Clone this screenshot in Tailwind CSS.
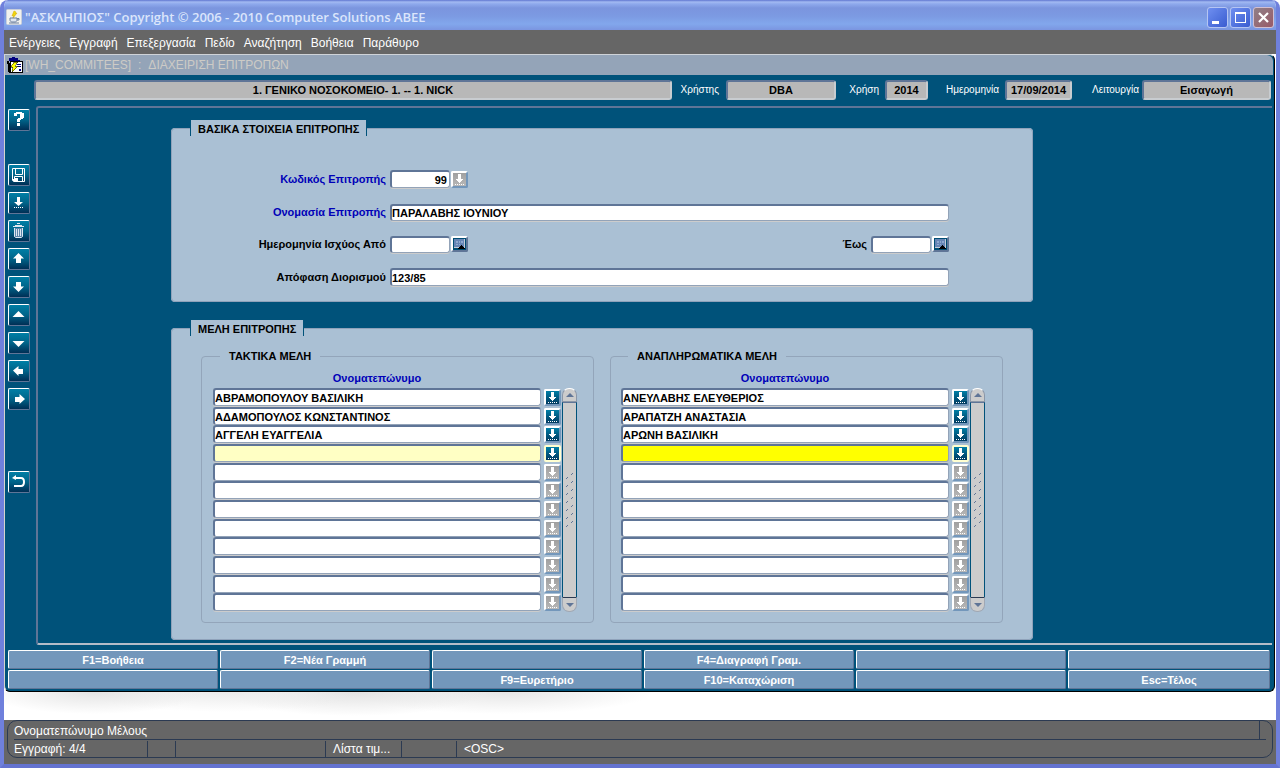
<!DOCTYPE html>
<html lang="el">
<head>
<meta charset="utf-8">
<title>ΑΣΚΛΗΠΙΟΣ - Διαχείριση Επιτροπών</title>
<script src="https://cdn.jsdelivr.net/npm/@tailwindcss/browser@4"></script>
</head>
<body class="flex min-h-screen flex-col rounded-t-lg border-x-4 border-b-4 border-x-[#6f80dc] border-b-[#6473d0] bg-white font-['Liberation_Sans',Arial,sans-serif] text-[11px] leading-4 text-black">

<!-- shared icon shapes -->
<svg class="hidden" aria-hidden="true">
  <symbol id="list" viewBox="0 0 13 13" shape-rendering="crispEdges"><path fill="currentColor" d="M5 1h3v5h2v1H9v1H8v1H7v1H6V9H5V8H4V7H3V6h2zM2 11h1v1H2zM4 11h1v1H4zM6 11h1v1H6zM8 11h1v1H8zM10 11h1v1h-1z"/></symbol>
  <symbol id="cal" viewBox="0 0 13 12" shape-rendering="crispEdges"><path fill="#004d73" d="M0 0h13v12H0z"/><path fill="#c3ccd6" d="M1 1h11v9H1z"/><path fill="#6685b5" d="M1 1h10v8H1z"/><path fill="#8fa9cf" d="M3 3h2v2H3zM6 3h1v2H6zM8 3h2v2H8zM3 6h2v1H3zM6 6h1v1H6z"/><path fill="#000" d="M8 7h1v1h1v1h1v1h1v1H5v-1h1V9h1V8h1z"/></symbol>
</svg>

<!-- title bar -->
<header class="-mx-1 flex h-[30px] shrink-0 items-center rounded-t-lg bg-[linear-gradient(#6076d0_0,#a3baf2_2px,#8ea9ec_4px,#7b95de_8px,#7c9ae2_16px,#82a7ec_24px,#7b95e0_30px)] pt-1 pr-[6px] pl-[6px]">
  <svg class="h-4 w-4" viewBox="0 0 16 16"><rect x=".5" y=".5" width="15" height="15" rx="1" fill="#f2f2ee" stroke="#c9cfdc"/><path d="M8 2l2 1-1 2 2-1-4 5 1-3-2 1z" fill="#f5d90a" stroke="#d8b400" stroke-width=".6"/><path d="M4 9h7v2c0 1-1 2-2 2H6c-1 0-2-1-2-2zM11 9.500h2v1.500h-2" fill="#dfe6f0" stroke="#6b7f9e"/><path d="M3 14h10" stroke="#6b7f9e"/></svg>
  <h1 class="ml-[3px] flex-1 font-['Open_Sans','Noto_Sans',sans-serif] text-[13px] font-semibold whitespace-nowrap text-[#dbe5fb]">"ΑΣΚΛΗΠΙΟΣ" Copyright © 2006 - 2010 Computer Solutions ΑΒΕΕ</h1>
  <div class="flex gap-[2px]">
    <button aria-label="Ελαχιστοποίηση" class="h-[21px] w-[21px] rounded-[3px] border border-[#b5c5f3] bg-linear-to-br from-[#6f8ff0] to-[#3a5cd0]"><svg class="h-[19px] w-[19px]" viewBox="0 0 19 19"><path d="M4 13h7v3H4z" fill="#fff"/></svg></button>
    <button aria-label="Μεγιστοποίηση" class="h-[21px] w-[21px] rounded-[3px] border border-[#b5c5f3] bg-linear-to-br from-[#6f8ff0] to-[#3a5cd0]"><svg class="h-[19px] w-[19px]" viewBox="0 0 19 19"><path fill-rule="evenodd" d="M4 4h11v11H4zM5 6v8h9V6z" fill="#fff"/></svg></button>
    <button aria-label="Κλείσιμο" class="h-[21px] w-[21px] rounded-[3px] border border-[#d3bfd0] bg-linear-to-br from-[#8f8088] to-[#985a68]"><svg class="h-[19px] w-[19px]" viewBox="0 0 19 19"><path d="M5 5l9 9M14 5l-9 9" stroke="#fff" stroke-width="2.200"/></svg></button>
  </div>
</header>

<nav class="flex h-6 shrink-0 items-center gap-[9px] bg-[#666] pt-[2px] pl-[5px] text-[12px] text-white">
  <button>Ενέργειες</button><button>Εγγραφή</button><button>Επεξεργασία</button><button>Πεδίο</button><button>Αναζήτηση</button><button>Βοήθεια</button><button>Παράθυρο</button>
</nav>

<!-- form window -->
<main class="mr-px flex flex-col rounded-tr-md rounded-b-md border border-t-[#cfd3d8] border-r-black border-b-black border-l-[#d4d4cc] bg-[#00527a]">
  <div class="mr-px flex h-5 items-center rounded-tr-md bg-[#94a4b8] pl-[2px] text-[12px] text-[#cdcbc6]">
    <svg class="h-4 w-4" viewBox="0 0 16 16" shape-rendering="crispEdges"><path fill="#000080" d="M2 1h3V0h3v1h3v2h2v1H2z"/><path fill="#000" d="M0 4h2v3H0zM1 6h2v9h13v1H2v-1H1z"/><path fill="#fff" stroke="#000" d="M3.500 4.500h12v11h-12z"/><path fill="#000080" d="M10 7h4v1h-4zM10 9h4v1h-4zM12 12h2v2h-2z"/><path fill="#ff0" stroke="#000" stroke-width=".5" d="M7 5h4L8 9h3l-6 6 1-5H4z"/></svg>
    <h2 class="flex gap-[7px] pl-[2px] whitespace-nowrap"><span>[WH_COMMITEES]</span><span>:</span><span>ΔΙΑΧΕΙΡΙΣΗ ΕΠΙΤΡΟΠΩΝ</span></h2>
  </div>

  <div class="mt-[5px] flex h-5 items-center pr-[3px] pl-[29px] text-[10px] text-white">
    <input aria-label="Νοσοκομείο" readonly value="1. ΓΕΝΙΚΟ ΝΟΣΟΚΟΜΕΙΟ- 1. -- 1. NICK" class="h-5 min-w-0 flex-1 rounded-[3px] border-2 border-t-[#5f7597] border-r-[#c8ccd0] border-b-[#c8ccd0] border-l-[#5f7597] bg-[#b8b8b8] text-center text-[11px] font-bold text-black">
    <label for="h1" class="w-[54px] pr-[7px] text-right">Χρήστης</label>
    <input id="h1" readonly value="DBA" class="h-5 w-[110px] rounded-[3px] border-2 border-t-[#5f7597] border-r-[#c8ccd0] border-b-[#c8ccd0] border-l-[#5f7597] bg-[#b8b8b8] text-center text-[11px] font-bold text-black">
    <label for="h2" class="w-[49px] pr-[6px] text-right">Χρήση</label>
    <input id="h2" readonly value="2014" class="h-5 w-[43px] rounded-[3px] border-2 border-t-[#5f7597] border-r-[#c8ccd0] border-b-[#c8ccd0] border-l-[#5f7597] bg-[#b8b8b8] text-center text-[11px] font-bold text-black">
    <label for="h3" class="w-[77px] pr-[6px] text-right">Ημερομηνία</label>
    <input id="h3" readonly value="17/09/2014" class="h-5 w-[67px] rounded-[3px] border-2 border-t-[#5f7597] border-r-[#c8ccd0] border-b-[#c8ccd0] border-l-[#5f7597] bg-[#b8b8b8] text-center text-[11px] font-bold text-black">
    <label for="h4" class="w-[70px] pr-[3px] text-right">Λειτουργία</label>
    <input id="h4" readonly value="Εισαγωγή" class="h-5 w-[129px] rounded-[3px] border-2 border-t-[#5f7597] border-r-[#c8ccd0] border-b-[#c8ccd0] border-l-[#5f7597] bg-[#b8b8b8] text-center text-[11px] font-bold text-black">
  </div>

  <div class="mt-[6px] mr-[2px] flex">
    <div id="tools" class="flex w-[31px] shrink-0 flex-col gap-[6px] pt-[3px] pl-[3px]"></div>

    <div class="flex-1 rounded-l-[3px] border-t-2 border-b-2 border-l-2 border-t-[#5f7597] border-b-[#b4bcc8] border-l-[#5f7597] pt-3 pb-[3px] pl-[133px]">
      <fieldset class="w-[862px] rounded-[4px] border border-[#8fa2ba] bg-[#aac0d4] pt-[34px] pb-[14px] font-bold">
        <legend class="ml-[18px] h-4 border-x border-[#00527a] bg-[#aac0d4] px-[7px] leading-[18px]">ΒΑΣΙΚΑ ΣΤΟΙΧΕΙΑ ΕΠΙΤΡΟΠΗΣ</legend>
        <div class="flex w-[777px] flex-col gap-[15px]">
          <div class="flex h-[18px] items-center">
            <label for="code" class="w-[218px] pr-1 text-right text-[#0000b8]">Κωδικός Επιτροπής</label>
            <input id="code" value="99" class="h-[18px] w-[60px] rounded-[3px] border border-t-2 border-l-2 border-t-[#5f7597] border-r-[#93a3b8] border-b-[#93a3b8] border-l-[#5f7597] bg-white pr-[2px] text-right font-bold shadow-[0_1px_#ccc]">
            <button aria-label="Λίστα κωδικών" class="ml-px h-[17px] w-[17px] rounded-[2px] border-2 border-t-white border-r-[#7397bb] border-b-[#7397bb] border-l-white bg-linear-to-b from-[#a0a0a0] to-[#b8b8b8] text-white"><svg class="h-[13px] w-[13px]"><use href="#list"/></svg></button>
          </div>
          <div class="flex h-[18px] items-center">
            <label for="name" class="w-[218px] pr-1 text-right text-[#0000b8]">Ονομασία Επιτροπής</label>
            <input id="name" value="ΠΑΡΑΛΑΒΗΣ ΙΟΥΝΙΟΥ" class="h-[17px] min-w-0 flex-1 rounded-[3px] border border-t-2 border-l-2 border-t-[#5f7597] border-r-[#93a3b8] border-b-[#93a3b8] border-l-[#5f7597] bg-white font-bold shadow-[0_1px_#ccc]">
          </div>
          <div class="flex h-4 items-center">
            <label for="from" class="w-[218px] pr-1 text-right">Ημερομηνία Ισχύος Από</label>
            <input id="from" class="h-[17px] w-[60px] rounded-[3px] border border-t-2 border-l-2 border-t-[#5f7597] border-r-[#93a3b8] border-b-[#93a3b8] border-l-[#5f7597] bg-white font-bold shadow-[0_1px_#ccc]">
            <button aria-label="Ημερολόγιο από" class="ml-px h-4 w-[17px] rounded-[2px] border-2 border-t-white border-r-[#5f7597] border-b-[#5f7597] border-l-white bg-[#004d73]"><svg class="h-3 w-[13px]"><use href="#cal"/></svg></button>
            <label for="to" class="flex-1 pr-1 text-right">Έως</label>
            <input id="to" class="h-[17px] w-[60px] rounded-[3px] border border-t-2 border-l-2 border-t-[#5f7597] border-r-[#93a3b8] border-b-[#93a3b8] border-l-[#5f7597] bg-white font-bold shadow-[0_1px_#ccc]">
            <button aria-label="Ημερολόγιο έως" class="ml-px h-4 w-[17px] rounded-[2px] border-2 border-t-white border-r-[#5f7597] border-b-[#5f7597] border-l-white bg-[#004d73]"><svg class="h-3 w-[13px]"><use href="#cal"/></svg></button>
          </div>
          <div class="flex h-5 items-center">
            <label for="decision" class="w-[218px] pr-1 text-right">Απόφαση Διορισμού</label>
            <input id="decision" value="123/85" class="h-[18px] min-w-0 flex-1 rounded-[3px] border border-t-2 border-l-2 border-t-[#5f7597] border-r-[#93a3b8] border-b-[#93a3b8] border-l-[#5f7597] bg-white font-bold shadow-[0_1px_#ccc]">
          </div>
        </div>
      </fieldset>

      <fieldset class="mt-[18px] w-[862px] rounded-[4px] border border-[#8fa2ba] bg-[#aac0d4] pt-3 pb-4 pl-[29px] font-bold">
        <legend class="-ml-[11px] h-4 border-x border-[#00527a] bg-[#aac0d4] px-[7px] leading-[18px]">ΜΕΛΗ ΕΠΙΤΡΟΠΗΣ</legend>
        <div class="flex gap-4">
          <fieldset class="w-[393px] rounded-[4px] border border-[#93a5ba] px-[11px] pt-[6px] pb-[10px]">
            <legend class="ml-[7px] h-4 px-[9px]">ΤΑΚΤΙΚΑ ΜΕΛΗ</legend>
            <div class="h-[18px] w-[328px] text-center text-[#0000b8]">Ονοματεπώνυμο</div>
            <div class="flex"><div id="regular" class="grid h-[224px] w-[350px] grid-rows-12"></div><div class="scroll-slot"></div></div>
          </fieldset>
          <fieldset class="w-[393px] rounded-[4px] border border-[#93a5ba] px-[10px] pt-[6px] pb-[10px]">
            <legend class="ml-[7px] h-4 px-[9px]">ΑΝΑΠΛΗΡΩΜΑΤΙΚΑ ΜΕΛΗ</legend>
            <div class="h-[18px] w-[328px] text-center text-[#0000b8]">Ονοματεπώνυμο</div>
            <div class="flex"><div id="substitute" class="grid h-[224px] w-[350px] grid-rows-12"></div><div class="scroll-slot"></div></div>
          </fieldset>
        </div>
      </fieldset>
    </div>
  </div>

  <div id="keys" class="mt-[5px] grid grid-cols-[repeat(5,210fr)_202fr] gap-x-[2px] gap-y-px pr-1 pb-[2px] pl-[3px]"></div>
</main>

<div class="min-h-5 flex-1 bg-[radial-gradient(ellipse_110px_22px_at_90px_0,#e4e4e4,transparent),radial-gradient(ellipse_140px_20px_at_220px_0,#ebebeb,transparent),radial-gradient(ellipse_130px_24px_at_350px_0,#e2e2e2,transparent),radial-gradient(ellipse_150px_22px_at_500px_0,#e6e6e6,transparent)]"></div>

<footer class="shrink-0 bg-[#666] pr-[3px] pb-[6px] pl-[3px] text-[12px] text-white">
  <div class="rounded-[10px] border border-[#2b3a52]">
    <div class="mx-[6px] flex h-[19px] items-center border-b border-[#2b3a52]"><span class="flex-1 pt-px">Ονοματεπώνυμο Μέλους</span><span class="mr-[6px] h-[18px] w-px bg-[#2b3a52]"></span></div>
    <div class="mx-[6px] flex h-[17px] items-center leading-4">
      <span class="w-[134px] border-r border-[#2b3a52]">Εγγραφή: 4/4</span>
      <span class="h-4 w-7 border-r border-[#2b3a52]"></span>
      <span class="h-4 w-[150px] border-r border-[#2b3a52]"></span>
      <span class="w-[76px] border-r border-[#2b3a52] pl-[7px]">Λίστα τιμ...</span>
      <span class="h-4 w-[55px] border-r border-[#2b3a52]"></span>
      <span class="pl-[7px]">&lt;OSC&gt;</span>
    </div>
  </div>
</footer>

<script>
const tools = [
  ['Βοήθεια', 'mb-[27px]', '<path fill="#fff" d="M5 3h2V2h6v1h2v5h-1v1h-2v1h-1v2H8V9h1V8h2V4H8v2H5zM8 13h3v3H8z"/>'],
  ['Αποθήκευση', '', '<path fill="none" stroke="#fff" d="M3.500 3.500h12v13h-11l-1-1zM6.500 3.500v6h7v-6M5.500 16.500v-5h8v5"/><path fill="#fff" d="M6 13h3v3H6zM4 14h1v2H4z"/>'],
  ['Λίστα', '', '<path fill="#fff" d="M8 4h3v5h3l-4.500 4L5 9h3zM5 14h1v1H5zM7 14h1v1H7zM9 14h1v1H9zM11 14h1v1h-1zM13 14h1v1h-1z"/>'],
  ['Διαγραφή', '', '<path fill="#5f86ab" d="M5 7h9v9H5z"/><path fill="none" stroke="#dfe8f2" d="M5.500 7v8.500l1 1h6l1-1V7M7.500 8v7M9.500 8v7M11.500 8v7M4 5.500h11M6 4.500h7M8 2.500h3"/>'],
  ['Επάνω', '', '<path fill="#fff" d="M9.500 4L15 9.500h-3V14H7V9.500H4z"/>'],
  ['Κάτω', '', '<path fill="#fff" d="M9.500 15L4 9.500h3V5h5v4.500h3z"/>'],
  ['Προηγούμενη σελίδα', '', '<path fill="#fff" d="M9.500 6l6 6h-12z"/>'],
  ['Επόμενη σελίδα', '', '<path fill="#fff" d="M9.500 14l6-6h-12z"/>'],
  ['Αριστερά', '', '<path fill="#fff" d="M4 9.500L9.500 5v3H14v5H9.500v2z"/>'],
  ['Δεξιά', 'mb-[55px]', '<path fill="#fff" d="M16 10l-5.500-5v3H6v5h4.500v2z"/>'],
  ['Επιστροφή', '', '<path fill="#fff" d="M3 6l4-3v5z"/><path fill="none" stroke="#fff" stroke-width="2" d="M6 6h6c4 0 4 8 0 8H5"/>']
];
document.getElementById('tools').innerHTML = tools.map(([name, gap, shape]) =>
  `<button aria-label="${name}" class="${gap} h-[22px] w-[22px] rounded-[2px] border border-t-white border-r-[#5f7597] border-b-[#5f7597] border-l-white bg-linear-to-b from-[#007fa6] via-[#006489] to-[#002f55]"><svg class="h-5 w-5" viewBox="0 0 20 20">${shape}</svg></button>`).join('');

const members = {
  regular: ['Τακτικό μέλος', 'bg-[#ffffc4]', ['ΑΒΡΑΜΟΠΟΥΛΟΥ ΒΑΣΙΛΙΚΗ', 'ΑΔΑΜΟΠΟΥΛΟΣ ΚΩΝΣΤΑΝΤΙΝΟΣ', 'ΑΓΓΕΛΗ ΕΥΑΓΓΕΛΙΑ']],
  substitute: ['Αναπληρωματικό μέλος', 'bg-[#ffff00]', ['ΑΝΕΥΛΑΒΗΣ ΕΛΕΥΘΕΡΙΟΣ', 'ΑΡΑΠΑΤΖΗ ΑΝΑΣΤΑΣΙΑ', 'ΑΡΩΝΗ ΒΑΣΙΛΙΚΗ']]
};
for (const [id, [label, current, names]] of Object.entries(members)) {
  document.getElementById(id).innerHTML = Array.from({ length: 12 }, (_, i) => {
    const fill = i === 3 ? current : 'bg-white';
    const look = i > 3 ? 'border-t-white border-l-white border-r-[#7397bb] border-b-[#7397bb] from-[#a0a0a0] to-[#b8b8b8]'
      : i === 3 ? 'border-[#ffffd0] from-[#007fa6] to-[#003a60]'
      : 'border-t-white border-l-white border-r-[#7397bb] border-b-[#7397bb] from-[#007fa6] to-[#003a60]';
    return `<div class="flex min-h-0 gap-[3px]"><input aria-label="${label} ${i + 1}" value="${names[i] || ''}" class="${fill} h-[18px] w-[328px] rounded-[3px] border border-t-2 border-l-2 border-t-[#5f7597] border-r-[#93a3b8] border-b-[#93a3b8] border-l-[#5f7597] pt-px font-bold shadow-[0_1px_#ccc]"><button aria-label="Λίστα ${label} ${i + 1}" class="${look} mt-px h-[17px] w-[17px] rounded-[2px] border-2 bg-linear-to-b text-white"><svg class="h-[13px] w-[13px]"><use href="#list"/></svg></button></div>`;
  }).join('');
}

document.querySelectorAll('.scroll-slot').forEach(slot => {
  const grip = Array.from({ length: 7 }, (_, i) => `<path d="M2 ${7 + i * 8}l2-2M7 ${3 + i * 8}l2-2"/>`).join('');
  slot.innerHTML = `<div class="-ml-px flex h-[224px] w-[15px] flex-col">
    <button aria-label="Κύλιση πάνω" class="flex h-[14px] w-[15px] items-center justify-center rounded-t-[7px] border border-[#8b97a8] border-t-white bg-[#ccc]"><svg class="h-1 w-[8px]" viewBox="0 0 8 4"><path fill="#5f7597" d="M4 0l4 4H0z"/></svg></button>
    <div class="flex flex-1 items-center justify-center border-x border-t border-x-[#00527a] border-t-[#5f7597] bg-[#ccc]"><svg class="h-[56px] w-[12px] overflow-hidden" viewBox="0 0 12 56" fill="none" stroke="#5f7597">${grip}</svg></div>
    <button aria-label="Κύλιση κάτω" class="flex h-[15px] w-[15px] items-center justify-center rounded-b-[7px] border border-[#a0a8b4] border-t-[#2b3a52] bg-[#ccc]"><svg class="h-1 w-[8px]" viewBox="0 0 8 4"><path fill="#5f7597" d="M4 4l4-4H0z"/></svg></button>
  </div>`;
});

document.getElementById('keys').innerHTML = ['F1=Βοήθεια', 'F2=Νέα Γραμμή', '', 'F4=Διαγραφή Γραμ.', '', '', '', '', 'F9=Ευρετήριο', 'F10=Καταχώριση', '', 'Esc=Τέλος'].map(t =>
  `<button ${t ? '' : 'aria-label="Κενό πλήκτρο"'} class="h-[19px] rounded-[2px] border border-t-white border-r-[#5f7597] border-b-[#5f7597] border-l-white bg-[#7397bb] leading-4 font-bold text-white">${t}</button>`).join('');
</script>
</body>
</html>
